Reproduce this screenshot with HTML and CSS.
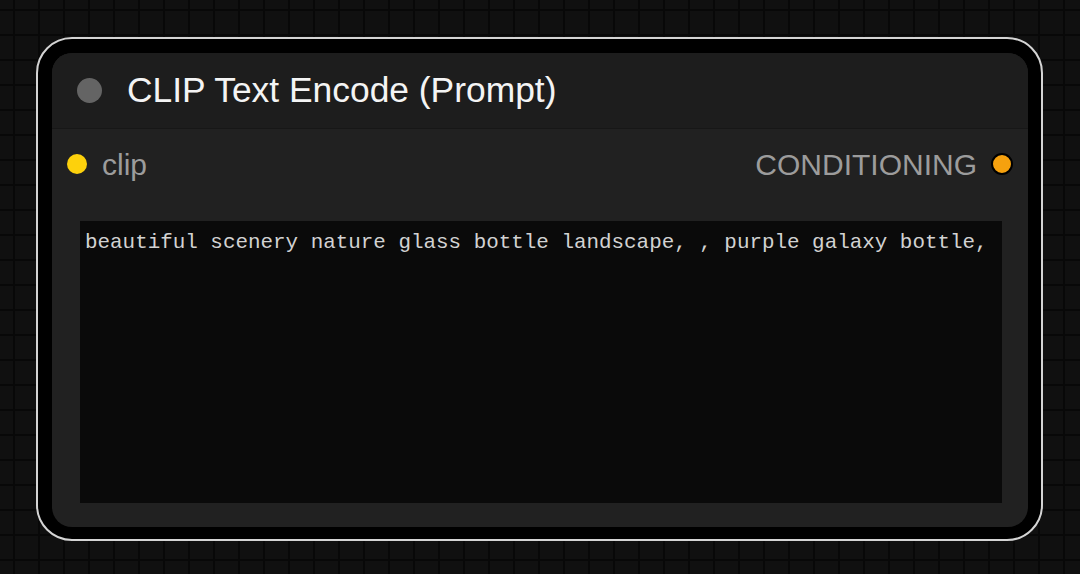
FILE: index.html
```html
<!DOCTYPE html>
<html lang="en">
<head>
<meta charset="utf-8">
<title>CLIP Text Encode (Prompt)</title>
<link rel="stylesheet" href="styles.css">
</head>
<body>
<div class="canvas">
  <div class="selection">
    <div class="node">
      <div class="node-title">
        <span class="collapse-dot"></span>
        <span class="title-text">CLIP Text Encode (Prompt)</span>
      </div>
      <div class="node-body">
        <div class="slots">
          <div class="slot slot-in">
            <span class="slot-dot dot-clip"></span>
            <span class="slot-label">clip</span>
          </div>
          <div class="slot slot-out">
            <span class="slot-label">CONDITIONING</span>
            <span class="slot-dot dot-cond"></span>
          </div>
        </div>
        <textarea class="prompt" spellcheck="false">beautiful scenery nature glass bottle landscape, , purple galaxy bottle,</textarea>
      </div>
    </div>
  </div>
</div>
</body>
</html>
```
FILE: styles.css
```css
html, body {
  margin: 0;
  padding: 0;
}
body {
  width: 1080px;
  height: 574px;
  overflow: hidden;
  background-color: #101010;
  background-image:
    linear-gradient(to right, #080808 0, #080808 2px, transparent 2px),
    linear-gradient(to bottom, #080808 0, #080808 2px, transparent 2px);
  background-size: 25px 25px;
  background-position: 13px 9px;
  font-family: "Liberation Sans", Arial, sans-serif;
}
.canvas {
  padding: 37px 0 0 36px;
}
.selection {
  box-sizing: border-box;
  width: 1007px;
  height: 504px;
  border: 2px solid #d4d4d4;
  border-radius: 36px;
  background: #000;
  padding: 14px;
}
.node {
  box-sizing: border-box;
  width: 976px;
  height: 474px;
  border-radius: 20px;
  background: #212121;
  display: flex;
  flex-direction: column;
  overflow: hidden;
}
.node-title {
  height: 75px;
  flex: none;
  background: #1d1d1d;
  border-bottom: 1px solid #171717;
  display: flex;
  align-items: center;
  padding-left: 25px;
}
.collapse-dot {
  width: 25px;
  height: 25px;
  border-radius: 50%;
  background: #646464;
  flex: none;
}
.title-text {
  margin-left: 25px;
  font-size: 35.4px;
  color: #f4f4f4;
  line-height: 1;
}
.node-body {
  flex: 1;
  display: flex;
  flex-direction: column;
  padding: 0 26px 24px 28px;
}
.slots {
  height: 68px;
  display: flex;
  justify-content: space-between;
  align-items: center;
  margin: 0 -11px 0 -13px;
  padding-top: 2px;
  box-sizing: border-box;
  flex: none;
}
.slot {
  display: flex;
  align-items: center;
  gap: 15px;
}
.slot-out {
  gap: 14px;
}
.slot-label {
  font-size: 30px;
  line-height: 1;
  color: #9c9c9c;
  position: relative;
  top: 1px;
}
.slot-dot {
  width: 20px;
  height: 20px;
  border-radius: 50%;
  flex: none;
}
.dot-clip {
  background: #fdd10c;
}
.dot-cond {
  box-sizing: border-box;
  width: 22px;
  height: 22px;
  background: #f6a10e;
  border: 2px solid #000;
}
.prompt {
  margin-top: 24px;
  flex: 1;
  box-sizing: border-box;
  width: 100%;
  border: none;
  outline: none;
  resize: none;
  background: #0a0a0a;
  color: #d2d2d2;
  font-family: "Liberation Mono", "Courier New", monospace;
  font-size: 20.9px;
  line-height: 25px;
  padding: 9px 5px 6px;
  overflow: hidden;
}
```
